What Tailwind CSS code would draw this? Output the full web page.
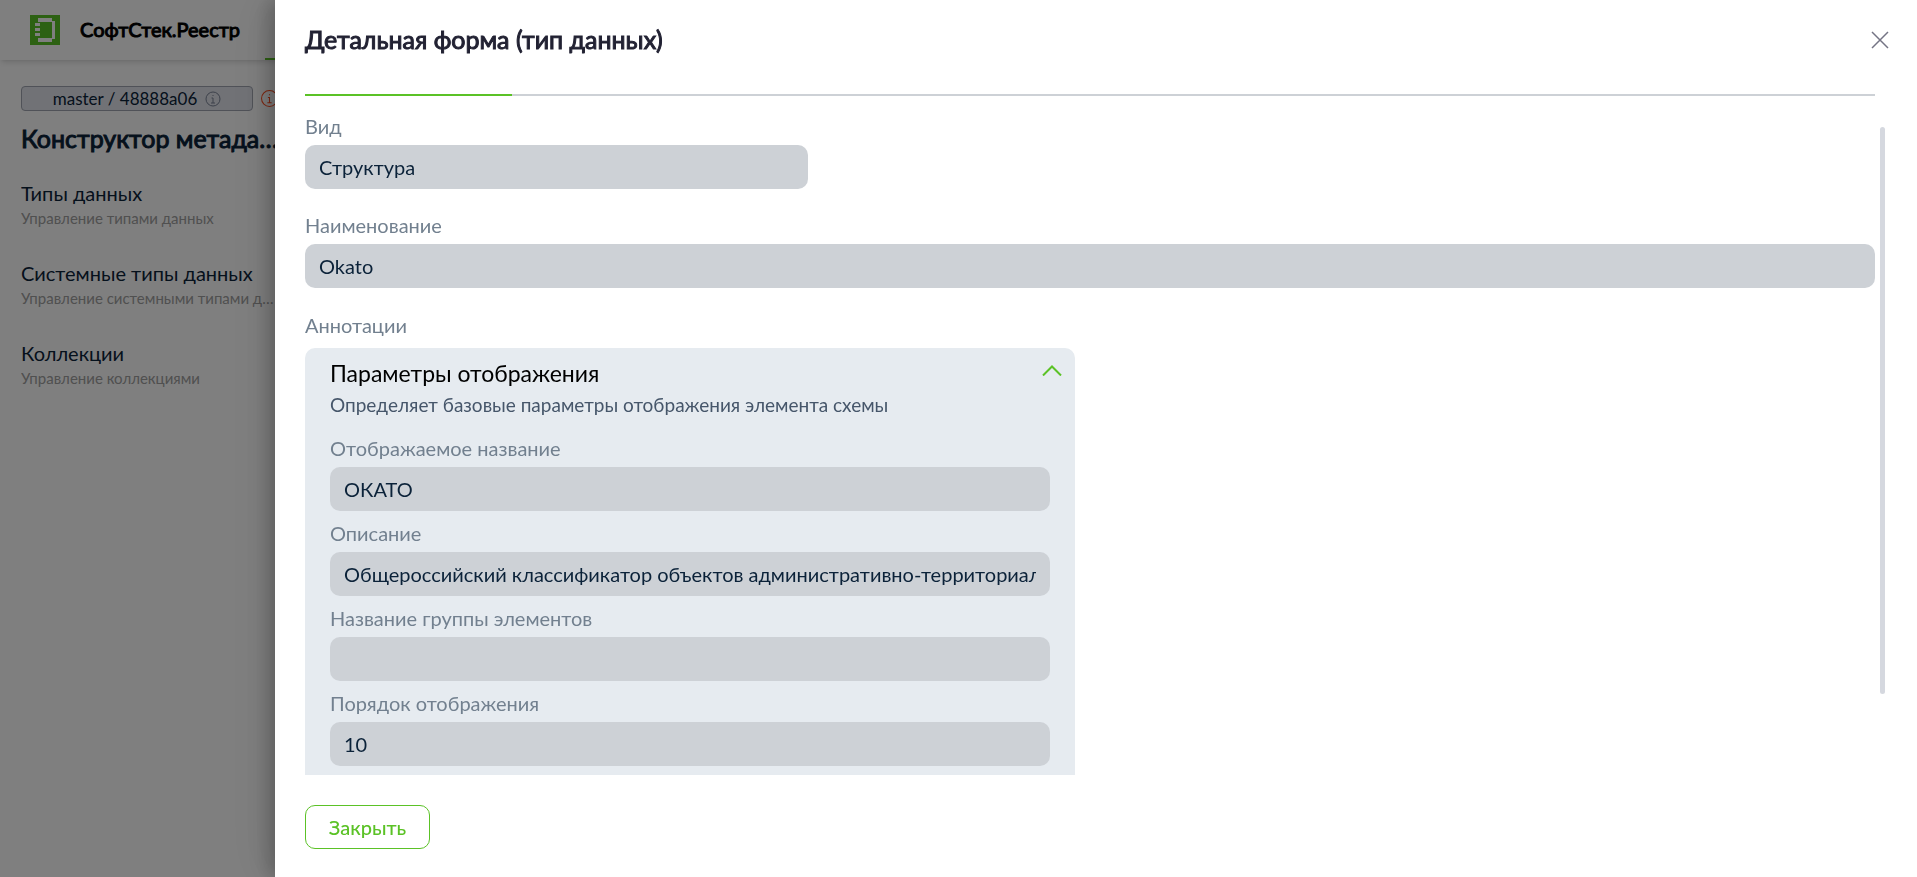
<!DOCTYPE html>
<html lang="ru">
<head>
  <meta charset="UTF-8" />
  <meta name="viewport" content="width=device-width, initial-scale=1.0" />
  <title>СофтСтек.Реестр</title>
  <script src="https://cdn.jsdelivr.net/npm/@tailwindcss/browser@4"></script>
</head>

<body class="h-screen overflow-hidden bg-white font-[Lato,sans-serif] text-[#0b2239]">

  <!-- Page under the drawer -->
  <header class="flex h-[60px] items-center pl-[30px] shadow-md">
    <svg class="size-[30px] shrink-0" viewBox="0 0 30 30" shape-rendering="crispEdges">
      <rect width="30" height="30" fill="#5bc226" />
      <path fill="#fff" d="M8 3h14v3h3v18h-3v3H8v-4h14V7H8zM5 8h5v3H5zM5 13h5v3H5zM5 18h5v3H5z" />
    </svg>
    <span class="ml-5 w-40 pb-0.5 text-xl text-black [-webkit-text-stroke:1px]">СофтСтек.Реестр</span>
    <nav class="ml-[25px] flex h-full w-40 border-b-2 border-[#5bc226]"></nav>
  </header>

  <aside class="w-[276px] pt-[26px] pl-[21px]">
    <div class="flex w-[280px] items-center gap-2">
      <button class="flex h-[25px] w-[232px] shrink-0 items-center justify-center gap-2 rounded border border-[#a0a4b0] bg-[#e2e5ec] text-[17px] leading-6">
        master / 48888a06
        <svg class="size-4" viewBox="0 0 16 16" fill="none" stroke="#7a8296"><circle cx="8" cy="8" r="7" /><path d="M8 4v1M6.500 7H8v5M6 12h4" /></svg>
      </button>
      <svg class="size-[17px] shrink-0" viewBox="0 0 16 16" fill="none" stroke="#ff4d1f"><circle cx="8" cy="8" r="7.500" /><path d="M8 4v1M6.500 7H8v5M6 12h4" /></svg>
    </div>
    <h1 class="mt-[11px] w-[262px] truncate text-[25px] leading-8 [-webkit-text-stroke:1px]">Конструктор метаданных</h1>
    <ul class="mt-[25px] space-y-[29px]">
      <li>
        <p class="truncate text-xl leading-7">Типы данных</p>
        <p class="truncate text-[15px] leading-[23px] text-[#a0a0a0]">Управление типами данных</p>
      </li>
      <li>
        <p class="truncate text-xl leading-7">Системные типы данных</p>
        <p class="truncate text-[15px] leading-[23px] text-[#a0a0a0]">Управление системными типами данных</p>
      </li>
      <li>
        <p class="truncate text-xl leading-7">Коллекции</p>
        <p class="truncate text-[15px] leading-[23px] text-[#a0a0a0]">Управление коллекциями</p>
      </li>
    </ul>
  </aside>

  <div class="fixed inset-0 bg-black/50"></div>

  <!-- Drawer -->
  <section class="fixed inset-y-0 right-0 left-[275px] flex flex-col bg-white pl-[30px] shadow-[-6px_0_16px_rgba(0,0,0,0.16),-9px_0_28px_rgba(0,0,0,0.1),-12px_0_48px_rgba(0,0,0,0.06)]">
    <div class="flex h-20 shrink-0 items-center justify-between pr-7">
      <h2 class="pb-0.5 text-[25px] leading-8 text-[#222233] [-webkit-text-stroke:1px]">Детальная форма (тип данных)</h2>
      <button aria-label="Закрыть окно">
        <svg class="size-[18px]" viewBox="0 0 18 18" fill="none" stroke="#747484" stroke-width="1.500"><path d="M1 1l16 16M17 1L1 17" /></svg>
      </button>
    </div>
    <div class="mt-3.5 mr-[42px] h-0.5 shrink-0 bg-[#cdd1d6]">
      <div class="h-full w-[207px] bg-[#5bc226]"></div>
    </div>

    <div class="mt-4 flex min-h-0 flex-1">
      <form class="min-w-0 flex-1 overflow-hidden">
        <label for="kind" class="block text-xl leading-7 text-[#72808f]">Вид</label>
        <input id="kind" readonly value="Структура" class="mt-[5px] block h-11 w-[503px] max-w-full rounded-[10px] bg-[#cdd1d6] px-3.5 text-xl" />

        <label for="name" class="mt-[22px] block text-xl leading-7 text-[#72808f]">Наименование</label>
        <input id="name" readonly value="Okato" class="mt-[5px] block h-11 w-full rounded-[10px] bg-[#cdd1d6] px-3.5 text-xl" />

        <p class="mt-[23px] text-xl leading-7 text-[#72808f]">Аннотации</p>
        <div class="mt-[9px] w-[770px] max-w-full rounded-[10px] bg-[#e6ebf0] px-[25px] pt-[11px] pb-6">
          <div class="-mr-3 flex items-start justify-between">
            <h3 class="text-[23px] leading-7 text-black">Параметры отображения</h3>
            <button type="button" aria-label="Свернуть" class="mt-1.5">
              <svg class="h-[11px] w-5" viewBox="0 0 20 11" fill="none" stroke="#5bc226" stroke-width="2"><path d="M1 10.500l9-9 9 9" /></svg>
            </button>
          </div>
          <p class="mt-1 text-[19px] leading-7 text-[#46566a]">Определяет базовые параметры отображения элемента схемы</p>

          <div class="mt-[15px] space-y-2">
            <div>
              <label for="title" class="block text-xl leading-7 text-[#72808f]">Отображаемое название</label>
              <input id="title" readonly value="ОКАТО" class="mt-[5px] block h-11 w-full rounded-[10px] bg-[#cdd1d6] px-3.5 text-xl" />
            </div>
            <div>
              <label for="description" class="block text-xl leading-7 text-[#72808f]">Описание</label>
              <input id="description" readonly value="Общероссийский классификатор объектов административно-территориального деления" class="mt-[5px] block h-11 w-full rounded-[10px] bg-[#cdd1d6] px-3.5 text-xl" />
            </div>
            <div>
              <label for="group" class="block text-xl leading-7 text-[#72808f]">Название группы элементов</label>
              <input id="group" readonly value="" class="mt-[5px] block h-11 w-full rounded-[10px] bg-[#cdd1d6] px-3.5 text-xl" />
            </div>
            <div>
              <label for="order" class="block text-xl leading-7 text-[#72808f]">Порядок отображения</label>
              <input id="order" readonly value="10" class="mt-[5px] block h-11 w-full rounded-[10px] bg-[#cdd1d6] px-3.5 text-xl" />
            </div>
          </div>
        </div>
      </form>
      <!-- Scrollbar -->
      <div class="mt-[15px] mr-8 ml-[5px] w-[5px]">
        <div class="h-7/8 rounded-full bg-[#d5d8df]"></div>
      </div>
    </div>

    <div class="shrink-0 pt-[30px] pb-7">
      <button class="h-11 w-[125px] rounded-[10px] border border-[#5bc226] text-xl font-medium text-[#5bc226]">Закрыть</button>
    </div>
  </section>
</body>
</html>
